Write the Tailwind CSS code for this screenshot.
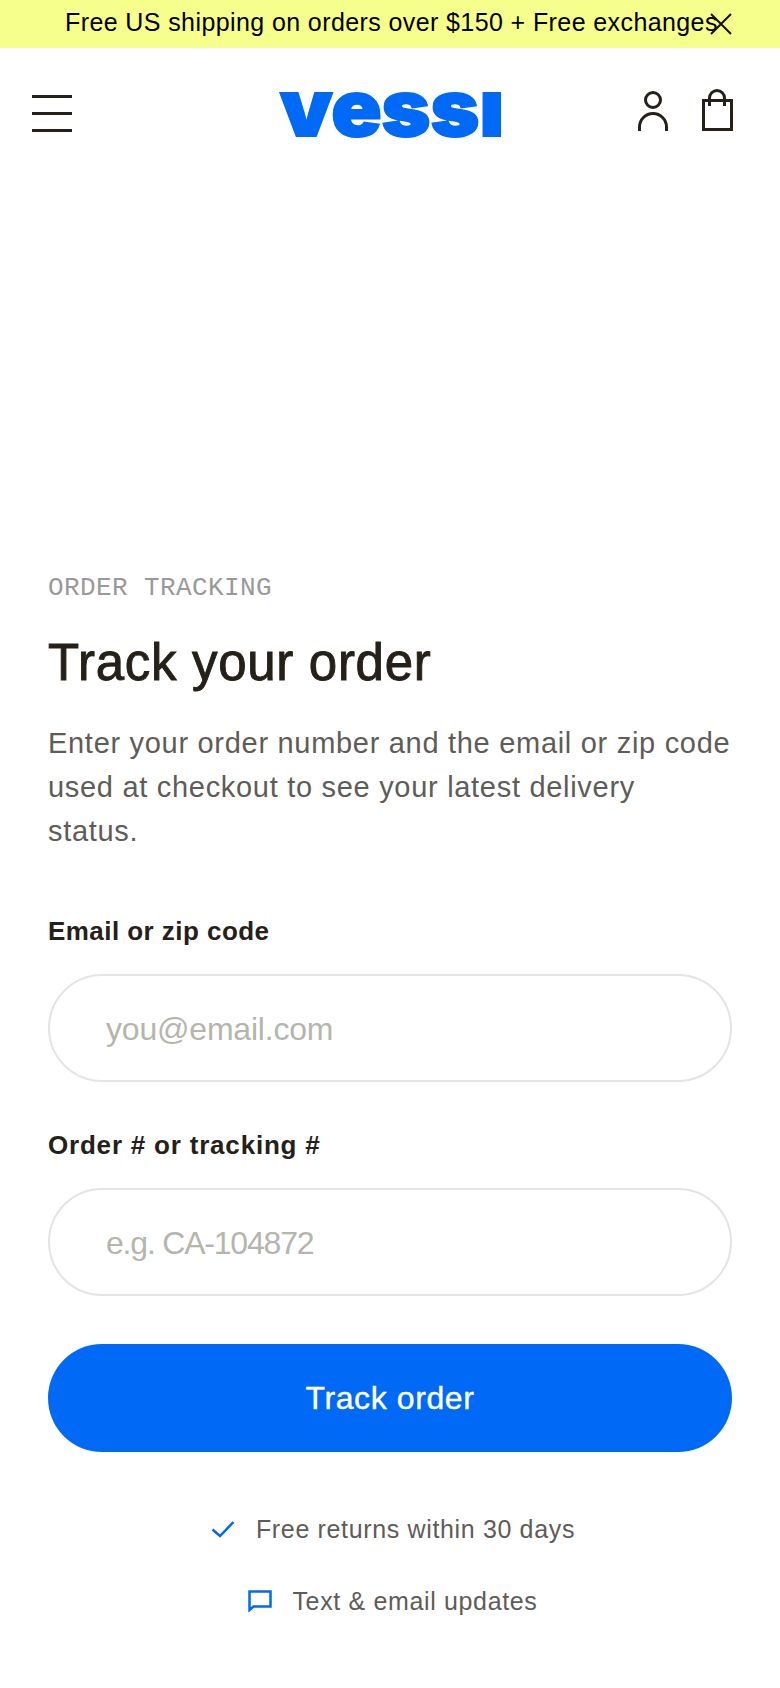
<!DOCTYPE html>
<html lang="en">
<head>
    <meta charset="UTF-8">
    <meta name="viewport" content="width=device-width, initial-scale=1.0">
    <title>Track your order - Vessi</title>
    <script src="https://cdn.jsdelivr.net/npm/@tailwindcss/browser@4"></script>
</head>
<body class="bg-white font-['Liberation_Sans',sans-serif] text-[#26201b] overflow-hidden">
    <div class="h-[1688px] w-[780px]">
        <!-- Promo banner -->
        <div class="relative flex h-12 items-center bg-[#f6ff8b] pb-[5px] pl-[65px] text-[25px] leading-[38px] tracking-[0.4px] text-black">
            <span class="whitespace-nowrap">Free US shipping on orders over $150 + Free exchanges</span>
            <svg class="absolute left-[709px] top-[12px]" width="24" height="24" viewBox="0 0 24 24" fill="none" stroke="#111" stroke-width="2"><path d="M2 2 22 22M22 2 2 22"/></svg>
        </div>

        <!-- Header -->
        <header class="grid h-[130px] grid-cols-[1fr_auto_1fr] items-center px-8">
            <button class="flex h-[37px] w-10 flex-col justify-between">
                <span class="block h-[3px] w-10 bg-[#26201b]"></span>
                <span class="block h-[3px] w-10 bg-[#26201b]"></span>
                <span class="block h-[3px] w-10 bg-[#26201b]"></span>
            </button>
            <svg class="overflow-visible" width="222" height="48" viewBox="0 0 222 48">
                <text x="1" y="46.500" textLength="224" lengthAdjust="spacingAndGlyphs" font-family="Inter" font-weight="900" font-size="78" fill="#0069f5" stroke="#0069f5" stroke-width="2">vessı</text>
            </svg>
            <div class="mb-[6px] flex items-center justify-end gap-[34px] pr-[14px]">
                <svg width="30" height="44" viewBox="0 0 30 44" fill="none" stroke="#26201b" stroke-width="3"><circle cx="15" cy="12" r="7.500"/><path d="M1.500 43v-4a13.500 13.500 0 0 1 27 0v4"/></svg>
                <svg width="32" height="44" viewBox="0 0 32 44" fill="none" stroke="#26201b" stroke-width="3"><path d="M1.500 12.500h28v29h-28z"/><path d="M7.500 18V10a7.500 7.500 0 0 1 15 0v8"/></svg>
            </div>
        </header>

        <!-- Tracking form -->
        <main class="px-12 pt-[392px]">
            <p class="font-['Liberation_Mono',monospace] text-[26px] leading-9 tracking-[0.4px] text-[#999999]">ORDER TRACKING</p>
            <h1 class="mt-[28px] text-[51px] font-normal leading-[58px] tracking-[0.7px] [-webkit-text-stroke:0.9px_#26201b]">Track your order</h1>
            <p class="mt-[29px] text-[29px] leading-[44px] tracking-[0.7px] text-[#5e5c58]">Enter your order number and the email or zip code used at checkout to see your latest delivery<br>status.</p>

            <form class="mt-[60px]">
                <label class="block text-[26px] font-bold leading-9 tracking-[0.45px]">Email or zip code</label>
                <input class="mt-[25px] block h-[108px] w-[684px] rounded-full border-2 border-[#e4e4e2] px-14 pt-[2px] text-[32px] tracking-[-0.2px] placeholder:text-[#b5b5ae]" placeholder="you@email.com">
                <label class="mt-[45px] block text-[26px] font-bold leading-9 tracking-[0.8px]">Order # or tracking #</label>
                <input class="mt-[25px] block h-[108px] w-[684px] rounded-full border-2 border-[#e4e4e2] px-14 pt-[2px] text-[32px] tracking-[-1.2px] placeholder:text-[#b5b5ae]" placeholder="e.g. CA-104872">
                <button class="mt-[48px] block h-[108px] w-[684px] rounded-full bg-[#0069f5] text-[32px] tracking-[0.6px] text-white [-webkit-text-stroke:0.4px_#fff]">Track order</button>
            </form>

            <ul class="mt-[59px] flex flex-col items-center gap-[36px] pl-[6px] text-[25px] leading-9 tracking-[0.65px] text-[#5e5c58]">
                <li class="flex items-center gap-[21px]">
                    <svg width="24" height="18" viewBox="0 0 24 18" fill="none" stroke="#0069f5" stroke-width="2.500"><path d="M1.500 9.500 9 16 22.500 2"/></svg>
                    Free returns within 30 days
                </li>
                <li class="flex items-center gap-[20px]">
                    <svg width="24" height="22" viewBox="0 0 24 22" fill="none" stroke="#0069f5" stroke-width="2.500"><path d="M1.500 20V1.500h21v15H5.500z"/></svg>
                    Text &amp; email updates
                </li>
            </ul>
        </main>
    </div>
</body>
</html>
